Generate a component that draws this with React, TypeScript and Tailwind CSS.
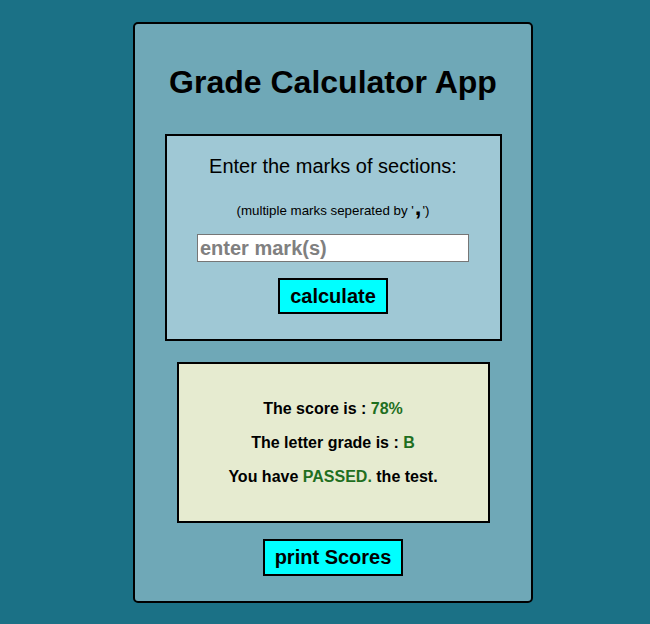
export default function App() {
  const score = 78;
  const grade = "B";

  return (
    <div className="min-h-screen bg-[#1b7186] flex justify-center items-start pl-[16px] pt-[22px] font-['Liberation_Sans',Arial,sans-serif] text-black">
      {/* Main card */}
      <div className="w-[400px] bg-[#6fa8b7] border-2 border-black rounded-[5px] flex flex-col items-center pt-[40px] pb-[25px]">
        <h1 className="text-[32px] leading-[37px] font-bold">Grade Calculator App</h1>

        {/* Input section */}
        <div className="mt-[33px] w-[337px] border-2 border-black bg-[#9fc8d5] flex flex-col items-center pt-[19px] pb-[25px]">
          <p className="text-[20px] leading-[23px]">Enter the marks of sections:</p>
          <p className="mt-[21px] text-[13.33px] leading-[16px]">
            (multiple marks seperated by '<span className="mx-[1px] font-bold text-[24px] leading-[16px]">,</span>')
          </p>
          <input
            type="text"
            placeholder="enter mark(s)"
            className="mt-[15px] w-[272px] h-[28px] bg-white border border-[#767676] px-[2px] text-[20px] font-bold placeholder:text-[#808080] outline-none"
          />
          <button className="mt-[16px] bg-[#00ffff] border-2 border-black px-[10px] py-[5px] text-[20px] leading-[22px] font-bold">
            calculate
          </button>
        </div>

        {/* Result */}
        <div className="mt-[21px] w-[313px] h-[161px] border-2 border-black bg-[#e6ebd0] flex flex-col items-center justify-center gap-[15px] text-[16px] leading-[19px] font-bold">
          <p>
            The score is : <span className="text-[#1f6f1f]">{score}%</span>
          </p>
          <p>
            The letter grade is : <span className="text-[#1f6f1f]">{grade}</span>
          </p>
          <p>
            You have <span className="text-[#1f6f1f]">PASSED.</span> the test.
          </p>
        </div>

        <button className="mt-[16px] bg-[#00ffff] border-2 border-black px-[10px] py-[5px] text-[20px] leading-[23px] font-bold">
          print Scores
        </button>
      </div>
    </div>
  );
}
